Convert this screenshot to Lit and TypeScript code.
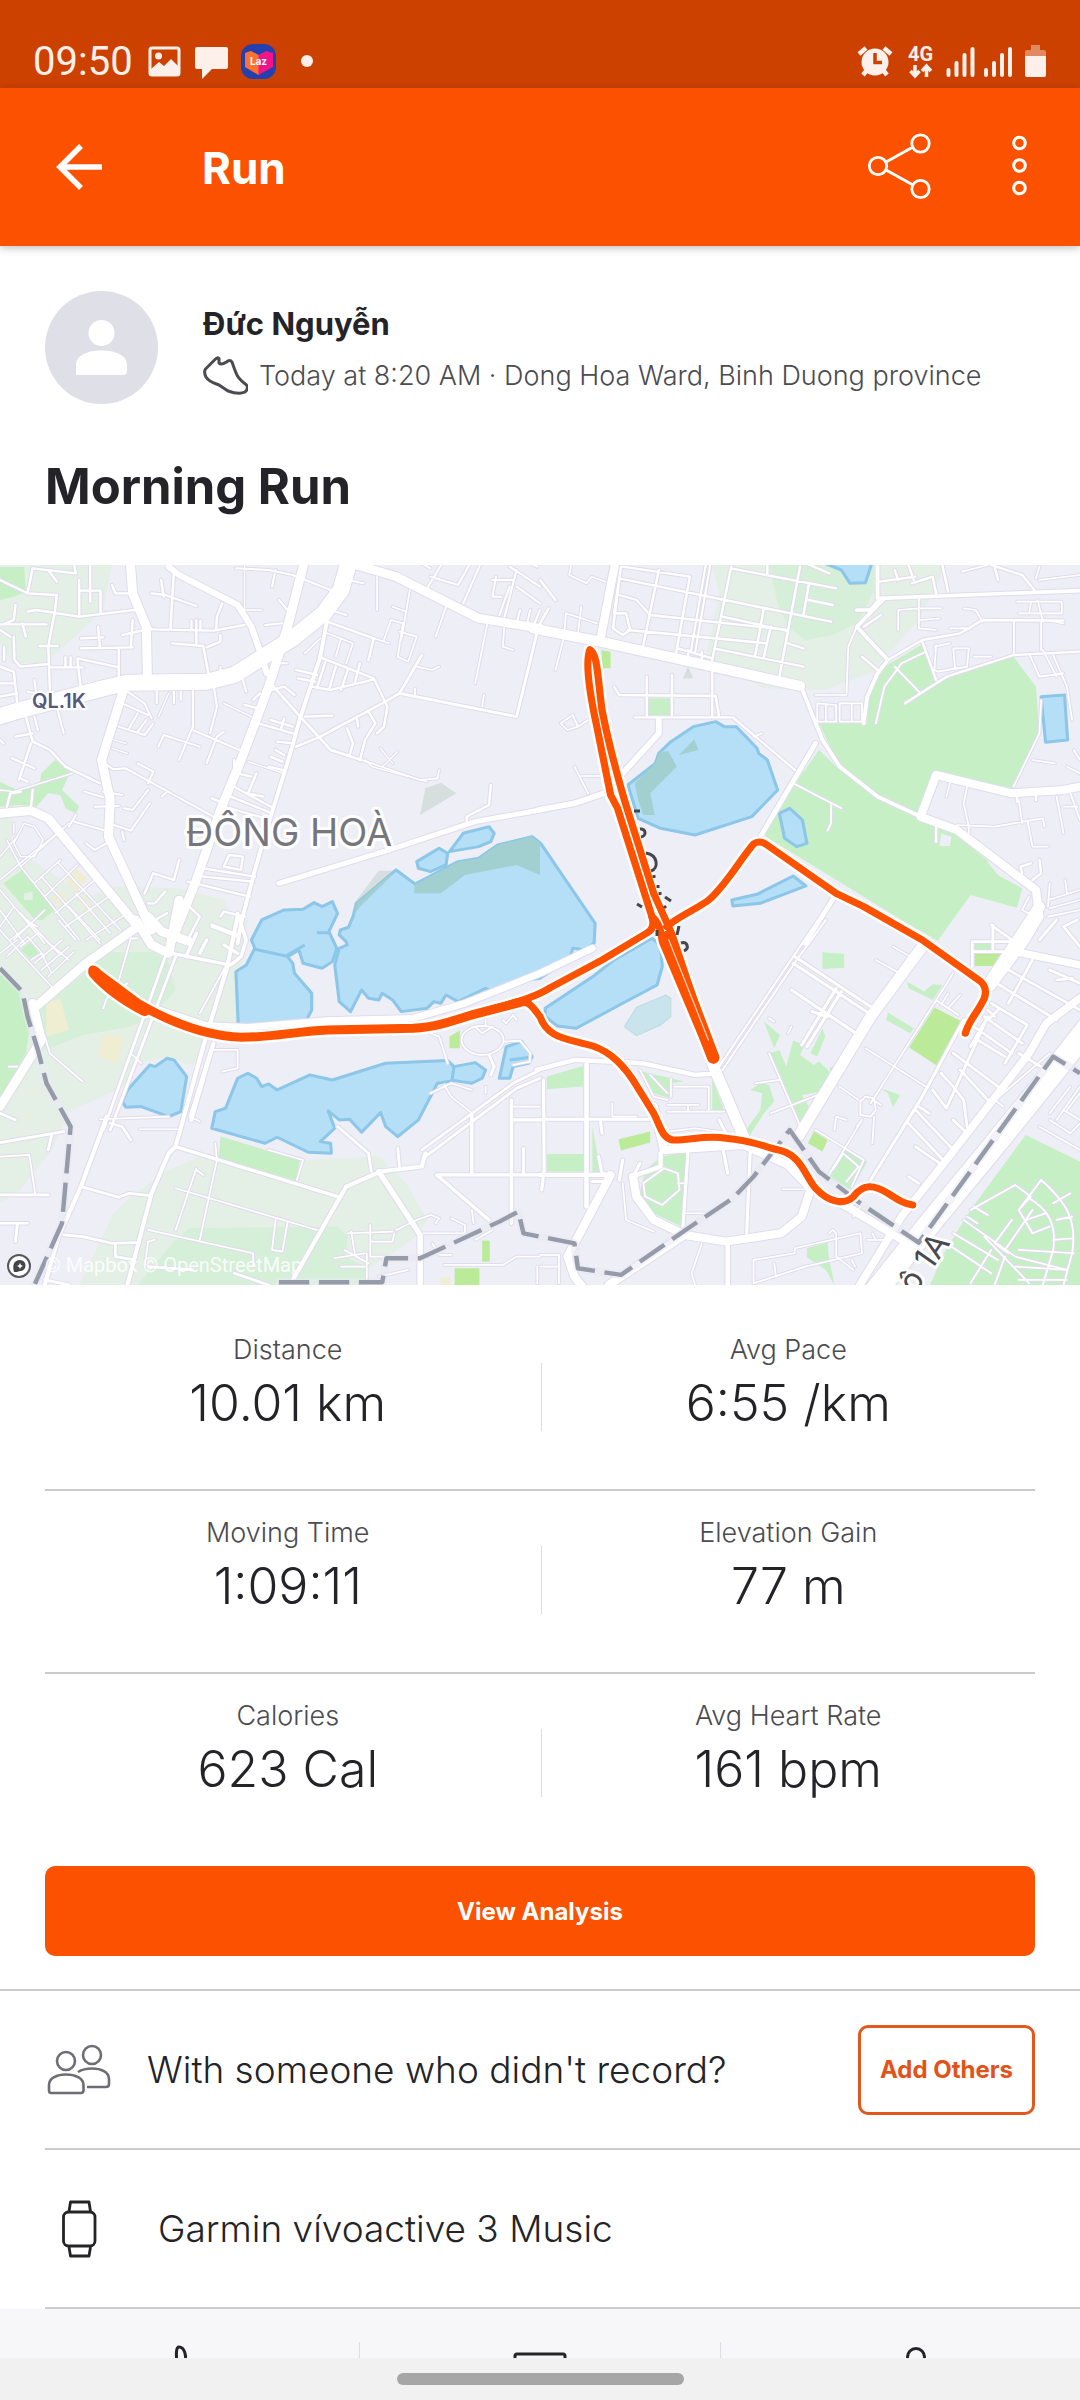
import { LitElement, html, svg, css } from "lit";
import { customElement, property } from "lit/decorators.js";

type Shape = [kind: string, d: string];
type Road = [width: number, d: string];

/* Map geometry is stored in four survey tiles, each 1568 units wide and 1080 units high. */
interface Tile {
  x: number;
  y: number;
  land: Shape[];
  water: string[];
  shade: Shape[];
  roads: Road[];
  border: string[];
}

const northWest: Tile = {
  x: 0,
  y: 0,
  land: [
    ["pale", "M75 15H325L300 150 165 280 130 310H40L0 250V120Z"],
    ["park", "M0 20H70L75 95 40 110 0 120Z"],
    ["pale", "M0 770L40 780 30 860 90 900 260 1010 330 980 520 985 650 1020 700 1140H0Z"],
    ["park", "M160 600L205 635 180 690 230 740 220 760 190 745 175 705 140 700 105 740 60 735 0 740V665L50 690 115 670 120 640Z"],
    ["park", "M10 970L65 930 160 1050 110 1090Z"],
    ["pale", "M70 1000L95 995V1020H70Z"],
    ["sand", "M190 960L220 925 255 955 220 995Z"],
    ["sand", "M150 1015L170 990 195 1010 170 1035Z"],
    ["sand", "M230 1020L245 1010 270 1050 255 1065Z"],
    ["grey", "M1235 685L1280 668 1325 700 1220 765Z"],
    ["grey", "M1028 1030L1100 932H1150L1030 1060Z"],
  ],
  water: [
    "M1025 1070L1035 1030 1150 930 1205 972 1330 905 1390 895 1445 855 1545 830 1570 850 1728 1090 1725 1150 1700 1170 1663 1165 1655 1195 1568 1255 1500 1265 1430 1295 1410 1285 1330 1325 1295 1305 1280 1330 1260 1325 1240 1345 1165 1355 1140 1320 1110 1300 1100 1320 1070 1315 1050 1290 1018 1355 985 1325 972 1215 985 1165 1008 1155 1005 1145 985 1125 988 1110 1012 1102Z",
    "M1210 905L1275 865 1300 880 1295 915 1250 935 1215 925Z",
    "M1305 875L1345 820 1420 800 1435 820 1425 845 1390 860Z",
    "M760 1080L825 1050 880 1048 912 1028 935 1040 965 1025 980 1060 955 1115 978 1165 965 1205 935 1225 880 1210 868 1170 835 1190 850 1210 855 1240 905 1300 905 1350 890 1380 750 1395 692 1402 685 1235 715 1215 740 1165 730 1140Z",
    "M740 1168L830 1188 885 1155M920 1118H955",
  ],
  shade: [
    ["marsh", "M1203 975L1330 905 1390 895 1445 855 1545 830 1568 848V945L1500 915 1350 945 1280 1000H1203Z"],
    ["marsh", "M1028 1065L1035 1030 1120 955 1140 940 1130 955 1045 1040Z"],
  ],
  roads: [
    [4, "M0 690L40 695 210 640M1105 565L1140 610M1155 575L1110 620M1060 600L1080 620 1240 665M650 430L730 470M710 0V150H760M460 470L490 400M325 565L370 580M330 540L365 550M720 605L825 640"],
    [4, "M40 850L70 790 100 800 125 840 100 890 60 890ZM20 840L60 920 230 1140M60 920L200 790M100 970L175 900M130 1010L225 915M160 1060L275 960M190 1100L330 1000M170 910L350 1110M120 950L290 1150M0 1050L70 1150M0 990L130 1150M0 1100L40 1040M0 960L70 900 190 800M0 890L50 830M30 1140L90 1090 110 1100M250 1140L370 1060M220 1000L320 1120M40 790V820"],
    [7, "M0 60L80 100 165 105 160 150 140 260 145 390M80 100L95 25 220 40 215 15M140 30L165 65M80 155L105 150 230 170 390 150M230 60V165M262 10V125M230 92H292V160M325 75L335 100H370M440 208L620 212 710 195M505 30L495 205M440 100L480 105 570 138M468 60L475 110"],
    [7, "M645 130L630 170 628 205M500 250L590 258 605 340M570 180V250M556 182V210M582 182V210M600 262L640 245V225M235 235L300 232M235 265L385 262M285 200L290 260M345 262V355M385 180L380 260M355 225L440 205M225 295L345 322M225 300L235 390M145 322H240M190 292V320M205 292V320"],
    [7, "M0 320L40 335 50 430M0 370H40M0 410L50 400M40 230L42 300 60 320 140 312M115 258H168M0 193H135M65 190L75 230M45 135L40 180 15 190M0 210L30 230M12 260V300M75 470L95 545 145 570 190 620 290 670M45 530L95 520M0 540L10 550M90 550L55 660M35 595L100 625M60 655L80 665M95 690L90 740M20 740L30 700 60 695"],
    [6, "M165 440L185 520M100 470L110 510M370 395L420 430 440 475M345 500L420 525 445 490M355 430L430 465M375 505L400 460M400 515L425 480M310 615L330 628 365 625 620 770M400 610L445 635 430 670M470 710L485 695M245 695L300 712M275 740L345 738M300 695L355 705M360 745L385 750 430 690M330 795L380 812 435 730M355 815L360 840"],
    [6, "M560 390V500L520 600M620 375L630 440 610 520M560 510L695 570M455 390V430M505 395V430M525 395V420M460 560L475 525 580 560M600 610L630 530 650 515M700 340L715 395M640 320V360M200 800L220 765M215 785L300 810M250 850L275 870 310 850M100 360L105 400 80 395"],
    [8, "M790 375L880 480 960 570 1050 600M860 560L930 530 1110 430 1160 400 1225 285M1160 400L1500 470 1560 215"],
    [5, "M1050 600L1220 660 1270 655 1275 630M1210 320L1255 330 1275 320M1405 405L1400 440M1205 385V410M1085 235L1130 250M1115 240L1135 180 1170 190 1155 290 1185 305 1210 230 1160 215M1190 90L1165 240M1095 50V150M1295 140L1265 230M1415 190L1380 370M1465 190L1460 260 1490 270M1140 140L1180 155M885 280L930 235M950 220L1025 250 1005 310M990 235L975 290"],
    [7, "M950 185L1085 235 1070 300M925 290L1085 355 1125 440 1115 500 1095 520M905 380L960 390 1080 360M945 305L920 385M975 320L955 390M1010 330L990 390M1045 310L1030 370M860 330L920 345M865 355L915 365M885 470L965 467M785 480L850 500M805 545L850 550M750 490L850 520M825 475L815 510M1035 470L1040 500M1070 455L1090 490 1060 540 1045 600M1008 505L1025 550 1015 585M710 435L750 445M735 420L755 400M790 390L825 380 855 405"],
    [6, "M685 25L780 30 850 45 960 90M800 30L790 80M810 120L835 150M1010 60L1055 70M960 150L1005 165M770 195L820 190M810 310H835M1205 0L1250 25M1240 85L1290 0M1250 50L1330 75 1370 0M1345 130L1400 0M1430 60H1490M1440 50L1430 110H1455M1480 80L1450 165M1500 30L1465 170M1510 150L1500 190M1540 150L1530 190M1568 150L1550 195M1560 20L1520 0M1500 80L1568 130M1480 20L1568 80"],
    [7, "M1425 675L1420 735 1355 770V785M680 680L795 745M670 710L790 760M650 740L785 780M615 715L650 730M690 640L730 650M680 600V630M800 570L825 585M785 590L820 605M780 620L820 630M745 640L720 700 765 710M590 925L740 950M590 950L735 965M545 965L725 1010M665 885L705 890 700 930 650 920ZM520 900L505 960 445 940 420 1000M480 995L450 1030H430M550 1040L580 1070 550 1130M615 1100L690 1130M640 1070L650 1055 710 1070M450 1080L485 1060"],
    [11, "M950 180L930 290 870 480 840 590 780 790 740 930 700 1090 690 1150"],
    [15, "M810 970L1130 870 1380 785 1568 750"],
    [18, "M490 20L520 45 690 135 730 200 760 290 775 340"],
    [26, "M378 0L385 100 425 200 428 350M360 385L295 600 320 720 315 830 440 1110M885 0L835 200 820 250 780 380 700 600 640 750 570 960 500 1140M1020 10L1150 50 1390 175 1568 205M-20 762L90 752 140 775 400 1100"],
    [48, "M-20 475L60 450 300 385 370 368 600 365 680 345 850 235 940 160 990 90 1015 0"],
  ],
  border: [],
};

const northEast: Tile = {
  x: 1568,
  y: 0,
  land: [
    ["pale", "M500 15H1180L1100 180 960 340 820 390 650 385 480 300 520 100Z"],
    ["soft", "M665 15H970V90L920 190 850 225 770 240 720 200 690 130Z"],
    ["park", "M810 490H940L950 410 1000 320 1115 250 1150 360 1375 290 1440 380 1450 520 1375 685 1150 640 1105 765 980 710 870 620Z"],
    ["park", "M810 570L860 620 980 710 1105 775 1200 820 1310 910 1330 945 1400 985 1385 1043 1250 1005 1155 1142 1050 1080 640 820Z"],
    ["base", "M1165 820L1195 830 1190 858H1160Z"],
    ["base", "M1298 905L1330 900 1405 970 1385 973 1330 945Z"],
    ["park", "M315 415H378V465H315Z"],
    ["lime", "M178 270L205 275V325H180Z"],
    ["grey", "M430 320L445 355H415Z"],
  ],
  water: [
    "M255 675L335 610 345 580 380 545 445 500 510 485 535 500H570L630 565 635 580 660 600 690 690 615 770 450 825 350 805 285 775Z",
    "M695 760L725 745 762 780 775 850 745 860 710 835Z",
    "M557 1020L630 1003 735 948 772 978 640 1030 560 1038Z",
    "M1455 410L1523 405 1532 540 1468 547Z",
    "M815 5L875 30 900 70 945 68 965 5Z",
  ],
  shade: [
    ["marsh", "M275 670L335 610 345 580 372 572 397 620 320 700 333 765 300 765 285 720Z"],
    ["marsh", "M403 585L448 538 460 570Z"],
  ],
  roads: [
    [5, "M735 670L875 745M845 735V790L835 812M45 330L70 230 75 160 165 190M120 140L110 220M90 15L85 45 135 70 150 50 190 65M60 490L95 465 110 500 80 510ZM110 500L140 480M100 620L140 700M115 648H180M800 405H890M805 430L860 435V485H805ZM870 430H935V485H870ZM905 430V485M830 430V485M890 400L895 260 920 200M1000 380L975 490M1120 275L1050 310 1000 380M1030 320L1105 400M620 530L645 520"],
    [5, "M1145 260L1190 250M1150 255L1145 330 1155 335 1240 320 1245 265H1200L1205 325M1260 290H1310M1420 280L1450 350 1520 340M1460 270L1500 350M1490 285L1530 380 1545 480M1455 420L1450 520 1375 680M1430 600L1495 610M1550 570L1568 600M1530 620L1568 640M1240 680L1230 730 1245 800V830M1210 795L1320 800 1460 775 1465 800M1190 670L1180 710M1390 720L1400 790M1415 780L1430 860H1475M1500 710L1520 820M1540 700L1568 780M1520 740H1560"],
    [5, "M1376 180V285M1455 185V270M1445 120L1460 185M1385 125H1515V160H1390M1425 130L1420 160M1230 145L1265 150 1285 185M1100 110V205L1150 210M1105 145H1165M1105 180L1160 175M1040 210V150L1100 145M1225 35L1300 15M1450 60L1568 45M1440 55L1450 20M1190 205H1250M1470 180L1520 190"],
    [7, "M1110 245L1150 360M1010 300L1110 240 1220 220 1285 180 1520 182M1310 15L1400 45 1435 90M1320 20L1330 60M1165 0L1185 95M1080 70L1140 50 1150 100M1030 30L1040 60M985 65L1090 50M1070 15L1085 60M935 290L985 335M940 200L990 165M1150 800V845M1385 700V725M1440 700V720M1400 940L1395 920 1425 910M1450 900L1455 940 1430 960"],
    [5, "M1480 970L1475 1040M1475 1020L1568 990M1480 1045L1568 1020M1475 1070L1568 1050M1525 960L1530 1000M1420 1010L1400 1050 1440 1070"],
    [7, "M240 20L435 50 395 280M230 55L845 185M345 30L300 255M555 20L500 300M755 20L695 350M555 25L860 85M230 105L280 120 320 165 720 210M255 210L660 250M505 265L765 320M780 75L765 165M780 120L850 135M650 145L625 285M670 200L650 290M400 265L500 295M235 20L215 160 250 160 262 210 240 225 212 205ZM720 250L765 265M660 0V40M750 0L840 40M530 170L715 212M430 270V290M470 275V295"],
    [6, "M495 10L450 280M482 10L438 275"],
    [7, "M215 380L230 405 505 408M510 408L520 470M310 350V470M383 345V465M500 335V470M275 472H560L740 630M1060 430L1180 350 1375 285 1568 275M0 60L45 120M0 190L25 145"],
    [11, "M985 115L1568 92M1000 115L920 200 1010 300M1010 300L980 340 950 410 940 490M980 10V115M920 150H960L985 120M760 385L820 540 870 620 980 710 1105 770"],
    [14, "M800 550L640 830M855 1010L770 1150"],
    [17, "M345 480V520L240 640M-5 750L100 730 200 695"],
    [24, "M220 0L175 240M1568 680L1520 690 1370 700 1150 645 1105 770 1210 810 1440 990 1450 1070 1410 1140 1310 1280"],
    [30, "M-20 205L175 245 755 378"],
  ],
  border: [],
};

const southWest: Tile = {
  x: 0,
  y: 1080,
  land: [
    ["pale", "M0 0H720L700 130 690 320 600 340 560 440 490 410 400 430 360 500 200 575 150 690 50 820 0 850Z"],
    ["park", "M0 160L60 215 90 300 75 400 0 560Z"],
    ["soft", "M210 190L310 97H480L510 210 440 290 380 320 240 345 130 390 100 260Z"],
    ["park", "M60 90L90 65 115 105 90 120Z"],
    ["sand", "M135 250L175 235 200 330 135 350Z"],
    ["sand", "M285 410L300 345 360 350 340 430Z"],
    ["pale", "M380 830L490 750 600 700 900 720 1100 710 1180 790 1240 900 1210 950 1000 1095H230L330 880Z"],
    ["soft", "M550 925L980 920 1010 950 1000 1010 1060 1040 1080 1095H400L500 970Z"],
    ["park", "M640 650L870 720 860 782 635 715Z"],
    ["lime", "M1305 350L1335 332V385H1305Z"],
    ["lime", "M1400 962H1422V1025H1400Z"],
    ["lime", "M1320 1045H1392V1100H1320Z"],
    ["sand", "M1280 1072H1308V1100H1280Z"],
  ],
  water: [
    "M355 545L370 510 435 435 450 440 485 415 505 420 542 470 525 575 490 590 410 560 365 562Z",
    "M615 625L625 575 655 565 690 475 720 460 745 475 760 500 780 492 805 510 900 465 965 480 1120 430 1300 422 1318 440 1380 428 1410 450 1400 475 1370 490 1320 482 1270 490 1250 530 1215 600 1155 650 1120 620 1105 578 1050 637 1015 598 985 600 953 573 972 625 930 665 960 670 962 700 895 697 805 652 770 670Z",
    "M1318 440L1312 485",
    "M1450 475L1470 380 1515 365 1545 410 1535 430 1490 440 1480 475Z",
    "M1480 420L1540 412",
  ],
  shade: [],
  roads: [
    [4, "M60 80L110 40 200 120M0 30L60 100 150 200M100 130L180 60M40 60L130 -30M150 80L60 -20M80 0L170 100M170 0L220 60M0 100L50 60M120 150L200 80M140 170L215 95M90 120L120 100 150 160M20 110L80 50 130 110M200 -40L290 60"],
    [5, "M0 710L85 705 102 820M570 745L510 930M570 750L590 765M510 805L920 930M625 670L630 720 580 960M430 930L735 1000V1040M800 900L790 990 820 995 835 905M780 690L880 720 862 780M290 598L490 590M405 628H515M620 390H690V445L645 455M610 390L550 590 580 605M130 350L145 400 240 485M400 55H380L340 200M300 265L310 235 370 190M580 280L660 130M25 440H50M450 960L430 965 420 1040M380 400L410 430"],
    [5, "M1250 340L1275 350 1300 430M1290 495L1310 530 1365 575M1250 520L1310 490 1370 510M1380 320L1400 340 1430 320M1410 300V320M1460 300L1470 310 1490 285 1500 300M1465 365L1510 362 1540 400 1538 425 1490 435M1230 940H1350L1350 915 1310 895M1150 930L1210 900 1250 885 1275 895 1265 910M1010 940L1140 935M1020 935L1030 1000M1075 915V1010H1130M1075 965H1140L1145 940M1000 990L1070 1030M970 1015L1060 1000M990 1040H1060M1065 1000V1090M1290 1035H1460L1500 1010H1568M1380 960L1430 930M1370 870L1375 910M1100 1070L1185 1050M1255 970L1275 1005H1310M1560 1040V1090M1485 560H1568M1410 500V520"],
    [5, "M1340 360C1340 335 1370 318 1400 318S1462 335 1462 360 1430 405 1400 405 1340 385 1340 360Z"],
    [8, "M235 800L345 832 375 820 440 828M185 945L240 950 325 970 405 968M335 970V1010L390 1020M0 668L185 635M150 645L140 690M0 825H140M0 910H80M50 915L45 965M0 580L45 600M320 610L355 620 380 660M1420 405L1435 440 1425 465M1155 685L1160 740M1520 685V765M980 620L1070 700 1078 755M130 1080L200 1095M680 1060L780 1095M430 1040L560 1050"],
    [10, "M1370 580V765M1485 540V910M1568 765H1268L1420 900M1485 600H1568M500 100L665 135M510 680L980 830M615 15L690 45M570 40L540 110M600 60L580 100M650 75L690 100M690 -20L715 60 700 110 670 135"],
    [8, "M480 110L300 630M510 110L320 630M1568 450L1490 490 1225 690M1568 475L1500 505 1235 710"],
    [12, "M690 -10L660 140 590 380 510 680 490 700 440 820 370 1095M310 590L235 800 170 950 130 1095M1235 700L1225 740 1105 755 1005 800 850 1080M620 370L555 600"],
    [16, "M1100 755L1220 945V1095"],
    [20, "M270 160L440 262 600 317 720 322 950 302 1200 295 1350 250 1568 160 1720 85"],
    [26, "M400 20L250 130 110 255M95 250L120 360 0 560M395 0L440 75 490 100M430 -10L470 35 550 65M520 -60L490 100"],
  ],
  border: ["M0 145L65 215 80 290 110 390 135 490 205 620 180 910 100 1095", "M810 1087H1110L1122 1015H1220L1450 905 1505 875 1520 940 1568 950 1668 970 1678 1045 1803 1065 1998 925 2128 835 2188 770 2293 630 2378 755 2498 850 2668 968 3058 410 3136 460"],
};

const southEast: Tile = {
  x: 1568,
  y: 1080,
  land: [
    ["park", "M820 97L883 102V143L820 147Z"],
    ["park", "M1262 65H1310V90H1262Z"],
    ["lime", "M1262 98H1337V138H1262Z"],
    ["park", "M1065 185L1115 215 1140 193 1168 195 1140 240 1070 205Z"],
    ["park", "M1010 278L1085 325 1075 340 1005 300Z"],
    ["lime", "M1145 263L1225 305 1160 442 1072 383Z"],
    ["park", "M650 305L697 345 680 385Z"],
    ["park", "M665 400L695 390 715 440 735 362 768 375 755 405 795 435 810 425 850 465 820 515 760 525 780 560 755 620 700 470Z"],
    ["park", "M785 400L820 325 828 350 805 410Z"],
    ["park", "M865 430L890 375 920 350 850 470 840 445Z"],
    ["park", "M610 510L640 490 665 495 680 545 650 580 610 645 590 640 640 570 645 520Z"],
    ["park", "M990 505L1045 525 1025 562 1010 520Z"],
    ["park", "M20 470L125 438V500L20 508Z"],
    ["park", "M295 455L420 485 380 490 378 535 330 520Z"],
    ["park", "M500 475L535 572H500Z"],
    ["park", "M20 702H128V755H20Z"],
    ["park", "M152 620L178 770 152 765Z"],
    ["lime", "M228 658L320 635V668L235 692Z"],
    ["park", "M355 710L425 693 410 920 330 880 290 820 305 750Z"],
    ["lime", "M795 635L835 660 820 695 778 670Z"],
    ["park", "M880 685L950 725 905 810 830 770Z"],
    ["park", "M775 985L835 968 838 1010 855 1095 830 1050 775 1012Z"],
    ["park", "M1410 645L1568 725V1100H1130L1180 985 1250 870Z"],
  ],
  water: ["M15 265L160 165 215 120 325 55 350 75 355 140 340 195 240 250 105 325 50 318 15 290Z"],
  shade: [["pool", "M245 320L280 262 365 225 380 235V290L350 315 280 347Z"]],
  roads: [
    [5, "M975 120L1045 160M1025 80L1075 110M1150 240L1215 285M1165 255L1185 220M1185 265L1220 225M945 385L1120 500M1200 160L960 550M870 500L925 540M880 700L850 750M800 630L940 720 905 800M880 700L925 740 890 785M930 545L945 530 970 535 975 570 960 590 930 585ZM970 590L965 670M975 545L990 555M855 630L860 590 890 600M920 620L935 600 830 780M665 400L760 630M670 580L820 520M625 490L695 480M665 295L680 305M720 340L730 320"],
    [5, "M380 475V530M390 500H490V570M370 575H535M370 555H460M210 550V590H280M430 560V575M370 635L450 625 550 640M420 880H480M240 790L250 900 330 935M470 970L440 1060 450 1095M705 808H770M620 1020L740 1000V985L930 940 935 1000 770 1040 620 1090ZM840 940L850 930 860 940V1010L910 1050M950 960H1020M680 1030L685 1070M905 1020L915 1040M300 790L360 745 400 760 405 810 355 855 305 830ZM400 790H420M290 450L330 530 370 540M320 465L370 520M0 1005H55V1090M0 1040H50M910 890L930 860M965 940L975 960"],
    [8, "M1360 150L1568 270M1430 120L1360 250M1310 180L1500 300M1480 150L1568 190M1500 180L1545 175M1310 250L1415 315 1350 430M1290 290L1400 370M1260 320L1370 400M1200 400L1330 500M1250 380L1300 290M1165 460L1200 500 1230 540 1240 620M1140 510L1180 565 1230 450 1300 290M1220 450L1300 540M1090 570L1200 690M1070 610L1170 720M1100 560L1130 580M1090 680L1160 730M1200 600L1240 640M1070 770L1100 790M1270 360L1350 410M1300 270L1320 290M1330 270L1300 300M1255 140V65H1390M1315 15V90M1310 15L1390 75M1260 95H1390M1450 60L1500 0M1520 20L1568 80M1520 20L1560 0M1390 400L1470 450"],
    [5, "M1380 795L1250 870M1430 870L1350 990M1455 780C1530 850 1560 900 1545 1000L1520 1095M1420 835C1480 870 1500 920 1490 990L1460 1095M1380 795L1425 830 1390 870 1430 940 1480 920M1290 950L1420 1090M1230 900L1380 1010 1530 1050M1200 940L1330 1020M1180 970L1310 1060M1370 900L1320 970 1360 1000M1410 900L1470 880M1455 780L1390 870M1490 850L1540 820M1500 900L1545 890M1490 960L1548 955M1390 990L1550 1000M1380 1040L1530 1050M1310 990L1250 1090M1350 1010L1320 1095M1240 890L1270 910M1390 1080L1530 1080M1260 860L1300 885"],
    [5, "M1300 560L1480 400M1320 540L1345 560M1500 600L1568 500M1520 570L1568 600M1450 620L1568 690M1480 580L1540 500M1480 600L1540 640 1568 610M1530 570L1568 520"],
    [9, "M735 130L970 290M740 110L975 270M730 210L925 345M860 205L760 375M875 215L775 380M790 275L835 290M1230 300L1110 530 960 780M0 598H340M430 690L415 920M610 700L600 940M520 600L540 640M530 680L545 760M175 600L180 640M170 710L180 760 210 765M230 780L240 720M10 480L12 750 5 810M270 770L290 730M150 785H200"],
    [6, "M815 -10L735 110 520 440M830 0L745 120 530 450"],
    [13, "M-10 450L100 420 300 430 450 465 520 460M135 430V860M0 765H200M545 960V1095M350 700V740L280 765"],
    [24, "M330 560L360 690 590 675 720 735 780 800 900 865 1060 965M205 765L80 1010 100 1070 130 1110M270 770L280 830 330 900 420 945 540 965 700 940 760 890 785 810M420 945L200 1095"],
    [22, "M1380 95L1568 135M1600 210L1470 310 1420 400 1180 720 1050 890 920 1110"],
    [32, "M1110 80L960 290 750 650M500 430L595 660M1450 -40L1310 180"],
    [66, "M1640 260L1480 470 1300 700 1140 900 970 1120"],
  ],
  border: [],
};

const tiles: Tile[] = [northWest, northEast, southWest, southEast];

/* Recorded track, in the same survey units as the tiles. */
const track: Road[] = [
  [21, "M1713 270C1700 300 1710 390 1733 500L1773 705 1793 745 1893 1070C1900 1095 1894 1110 1880 1118L1748 1200 1600 1282C1550 1315 1500 1325 1370 1365"],
  [27, "M1530 1322L1370 1365C1310 1385 1260 1402 1200 1405L950 1410C850 1415 800 1432 700 1432C600 1428 500 1390 400 1330L270 1230"],
  [21, "M1713 270C1735 280 1735 350 1748 450C1765 540 1785 620 1813 720L1898 1000 1950 1120 2073 1500"],
  [21, "M1893 1070C1925 1100 1917 1130 1925 1150L2066 1495"],
  [21, "M1936 1100C1968 1070 2018 1050 2058 1020C2108 975 2148 900 2188 852Q2203 840 2223 852L2428 1000 2508 1040 2678 1140 2848 1265Q2868 1285 2858 1315C2838 1360 2813 1380 2803 1420"],
  [21, "M1480 1332C1540 1310 1550 1350 1568 1370C1588 1430 1638 1435 1698 1452C1758 1465 1798 1500 1838 1560L1898 1660C1918 1700 1923 1735 1953 1740C1998 1742 2048 1725 2108 1735C2178 1740 2218 1760 2268 1772C2328 1790 2338 1850 2368 1885C2408 1930 2453 1935 2478 1910C2508 1870 2538 1875 2578 1900C2608 1920 2628 1933 2650 1935"],
];
const trackThick: string[] = ["M274 1237C310 1280 350 1312 420 1350", "M1938 1130L1956 1180 2071 1493"];

@customElement("route-map")
export class RouteMap extends LitElement {
  static styles = css`
    :host { display: block; }
    .map { display: block; width: 100%; background: #eeeef6; }
    .line { fill: none; stroke-linecap: round; stroke-linejoin: round; }
    .base { fill: #eeeef6; }
    .pale { fill: #e4efe6; }
    .soft { fill: #d6efd8; }
    .park { fill: #c6efc6; }
    .lime { fill: #bbea99; }
    .sand { fill: #efeed2; }
    .grey { fill: #d6dfde; }
    .pool { fill: #c9e4ec; stroke: #bcdcdc; stroke-width: 3; }
    .marsh { fill: #a2d0d1; }
    .water { fill: #b5dff7; stroke: #8cc6e8; stroke-width: 9; stroke-linejoin: round; }
    .casing { stroke: #e0dcec; }
    .road { stroke: #ffffff; }
    .border-halo { stroke: #e9e9f4; stroke-width: 24; opacity: 0.6; }
    .border { stroke: #969baa; stroke-width: 13; stroke-dasharray: 88 28; stroke-linecap: butt; }
    .halo { stroke: #ffffff; }
    .track { stroke: #fc5200; }
    .gap { stroke: #ffc9ad; stroke-width: 4; }
    .label { font-family: Inter, Roboto, sans-serif; paint-order: stroke; stroke: #ffffff; stroke-width: 6px; stroke-linejoin: round; }
    .town { font-size: 38px; font-weight: 400; fill: #76777e; }
    .ref { font-size: 20px; font-weight: 600; fill: #56587c; stroke-width: 4px; }
    .street { font-size: 32px; font-weight: 400; fill: #4a4a50; }
    .credit { font-family: Roboto, sans-serif; font-size: 20px; font-weight: 400; fill: #ffffff; opacity: 0.85; }
    .mark { fill: none; stroke: #45464c; stroke-width: 3; }
  `;

  render() {
    const at = (t: Tile) => `translate(${t.x} ${t.y})`;
    return html`<svg class="map" viewBox="0 0 1080 720" role="img" aria-label="Route map">
      <g transform="translate(0 -5) scale(0.3444 0.3333)">
        ${tiles.map((t) => svg`<g transform=${at(t)}>${t.land.map(([k, d]) => svg`<path class=${k} d=${d} />`)}</g>`)}
        ${tiles.map((t) => svg`<g transform=${at(t)}>
          ${t.water.map((d) => svg`<path class="water" d=${d} />`)}
          ${t.shade.map(([k, d]) => svg`<path class=${k} d=${d} />`)}
        </g>`)}
        ${tiles.map((t) => svg`<g transform=${at(t)}>${t.roads.map(([w, d]) => svg`<path class="line casing" stroke-width=${w + 6} d=${d} />`)}</g>`)}
        ${tiles.map((t) => svg`<g transform=${at(t)}>${t.roads.map(([w, d]) => svg`<path class="line road" stroke-width=${w} d=${d} />`)}</g>`)}
        ${tiles.map((t) => svg`<g transform=${at(t)}>${t.border.map((d) => svg`<path class="line border-halo" d=${d} /><path class="line border" d=${d} />`)}</g>`)}
        ${track.map(([w, d]) => svg`<path class="line halo" stroke-width=${w + 14} d=${d} />`)}
        ${trackThick.map((d) => svg`<path class="line halo" stroke-width="50" d=${d} />`)}
        ${track.map(([w, d]) => svg`<path class="line track" stroke-width=${w} d=${d} />`)}
        ${trackThick.map((d) => svg`<path class="line track" stroke-width="36" d=${d} />`)}
        <path class="line gap" d="M1942 1140L2057 1440" />
      </g>
      <path class="mark" d="M634 246H640M640 264C646 263 647 271 641 272M646 288C658 290 659 303 651 306M654 310V313M658 320V323M660 327V330M665 332L671 336M664 341L666 343M637 339L642 342M679 361L677 370M657 365V371M681 378C687 376 690 383 684 386" />
      <text class="label town" x="289" y="281" text-anchor="middle">ĐÔNG HOÀ</text>
      <text class="label ref" x="32" y="143">QL.1K</text>
      <text class="label street" transform="translate(951 678) rotate(-55)" text-anchor="end">ộ 1A</text>
      <circle cx="19" cy="701" r="11" fill="#ffffff" stroke="#55565c" stroke-width="2" />
      <path d="M14 707C12 700 14 695 20 695A5.500 5.500 0 0 1 20 706C18 707 16 707 14 707Z" fill="#44454b" />
      <path d="M20 698L21 700 23 701 21 702 20 704 19 702 17 701 19 700Z" fill="#ffffff" />
      <text class="credit" x="45" y="707">© Mapbox © OpenStreetMap</text>
    </svg>`;
  }
}

@customElement("stat-cell")
export class StatCell extends LitElement {
  @property() label = "";
  @property() value = "";

  static styles = css`
    :host { display: block; flex: 1; text-align: center; }
    .label { font-size: 27px; line-height: 32px; color: #4b4b50; }
    .value { font-size: 50px; line-height: 60px; font-weight: 350; margin-top: 7px; color: #242428; }
  `;

  render() {
    return html`<div class="label">${this.label}</div><div class="value">${this.value}</div>`;
  }
}

const stats = [
  [["Distance", "10.01 km"], ["Avg Pace", "6:55 /km"]],
  [["Moving Time", "1:09:11"], ["Elevation Gain", "77 m"]],
  [["Calories", "623 Cal"], ["Avg Heart Rate", "161 bpm"]],
];

@customElement("app-root")
export class AppRoot extends LitElement {
  static styles = css`
    :host {
      display: flex; flex-direction: column; height: 100vh; background: #ffffff;
      color: #242428; font-family: Inter, Roboto, sans-serif; font-weight: 300;
    }
    * { box-sizing: border-box; }
    svg { display: block; flex: none; }
    button { font: inherit; color: inherit; background: none; border: 0; padding: 0; margin: 0; cursor: pointer; }
    h1, h2, p { margin: 0; }

    .status {
      flex: none; display: flex; align-items: flex-end; justify-content: space-between;
      height: 88px; padding: 0 33px 5px; background: #cc4100; color: #fdefe9;
    }
    .group { display: flex; align-items: center; height: 44px; }
    .clock { font-family: Roboto, sans-serif; font-size: 40px; font-weight: 400; line-height: 44px; margin-right: 14px; padding-top: 2px; }

    .appbar {
      flex: none; display: flex; align-items: center; height: 158px; padding: 0 45px;
      background: #fc5200; color: #ffffff; position: relative; box-shadow: 0 2px 8px rgba(0, 0, 0, 0.25);
    }
    .appbar h1 { flex: 1; margin-left: 89px; font-size: 44px; font-weight: 700; line-height: 56px; padding-top: 2px; }
    .icon-button { display: block; flex: none; }
    .more { margin-left: 76px; }

    .page { flex: 1; min-height: 0; overflow: auto; scrollbar-width: none; }

    .athlete { display: flex; align-items: center; gap: 45px; padding: 45px 45px 0; }
    .who { padding-top: 4px; }
    .name { font-size: 31px; font-weight: 700; line-height: 40px; }
    .when { display: flex; align-items: center; gap: 11px; margin-top: 10px; font-size: 27px; line-height: 40px; color: #4b4b50; }
    .when span { padding-top: 2px; }
    .title { padding: 52px 45px 47px; font-size: 49px; font-weight: 700; line-height: 62px; }

    .stats { padding: 0 45px; }
    .row { display: flex; align-items: flex-start; height: 183px; padding-top: 26px; border-top: 2px solid #cbcbcd; }
    .row:first-child { margin-top: 21px; border-top-color: transparent; }
    .row stat-cell:first-child { margin-right: 6px; margin-left: -4px; }
    .rule { width: 1px; height: 68px; margin-top: 29px; background: #dcdcde; }

    .cta { padding: 11px 45px 33px; }
    .primary {
      display: block; width: 100%; height: 90px; border-radius: 10px; background: #fc5200;
      color: #ffffff; font-size: 24px; font-weight: 700;
    }
    .others {
      display: flex; align-items: center; height: 159px; padding: 0 45px; border-top: 2px solid #cbcbcd;
    }
    .others p { flex: 1; margin-left: 36px; font-size: 37px; line-height: 48px; }
    .outline {
      flex: none; height: 90px; padding: 0 19px; border: 3px solid #e2581f; border-radius: 10px;
      color: #e2531a; font-size: 24px; font-weight: 700;
    }
    .device {
      display: flex; align-items: center; gap: 61px; height: 161px; margin-left: 45px; padding-left: 17px;
      border: 2px solid #cbcbcd; border-width: 2px 0; font-size: 37px;
    }
    .tabs { display: flex; height: 140px; padding-top: 33px; }
    .footer { background: #f7f7fa; }
    .tab { flex: 1; display: flex; justify-content: center; align-items: flex-start; }
    .tab + .tab { border-left: 1px solid #dedee2; }

    .navbar { flex: none; display: flex; justify-content: center; padding-top: 15px; height: 42px; background: #f1f1f1; }
    .handle { width: 287px; height: 12px; border-radius: 6px; background: #a6a6a6; }
  `;

  private signal() {
    return svg`<path d="M2 24V29M10 17V29M18 9V29M26 3V29" stroke="currentColor" stroke-width="4" stroke-linecap="round" />`;
  }

  render() {
    return html`
      <div class="status">
        <div class="group">
          <span class="clock">09:50</span>
          <svg width="130" height="38" viewBox="147 42 130 38" role="img" aria-label="Notifications">
            <rect x="150" y="48" width="29" height="27" rx="2" fill="none" stroke="currentColor" stroke-width="3" />
            <circle cx="158.500" cy="56" r="3.500" fill="currentColor" />
            <path d="M151 69L159 62 164 66 171 59 179 67V75H151Z" fill="currentColor" />
            <path d="M197 47H226Q228 47 228 49V67Q228 69 226 69H212L202 79V69H197Q195 69 195 67V49Q195 47 197 47Z" fill="currentColor" />
            <rect x="241" y="44" width="35" height="35" rx="12" fill="#2340ae" />
            <path d="M245 53L251 51 258.500 55 266 51 273 53V67L258.500 75 245 67Z" fill="#f0148c" />
            <path d="M245 53L251 51 258.500 55V75L245 67Z" fill="#f9722e" />
            <text x="258.500" y="65" text-anchor="middle" font-family="Inter, sans-serif" font-size="10" font-weight="700" fill="#ffffff">Laz</text>
          </svg>
          <svg width="36" height="38" viewBox="277 42 36 38" aria-hidden="true"><circle cx="307" cy="61" r="6" fill="currentColor" /></svg>
        </div>
        <div class="group">
          <svg width="190" height="38" viewBox="857 42 190 38" role="img" aria-label="Alarm, 4G, signal, battery">
            <circle cx="875" cy="62" r="13.500" fill="currentColor" />
            <path d="M859 54L866 48M891 54L884 48M863 75L867 70M887 75L883 70" stroke="currentColor" stroke-width="4.500" />
            <path d="M875 53V62.500H882" fill="none" stroke="#cc4100" stroke-width="3.500" />
            <text x="920.500" y="61" text-anchor="middle" font-family="Roboto, sans-serif" font-size="20" font-weight="700" fill="currentColor">4G</text>
            <path d="M915 65V75M910.500 71L915 76 919.500 71M926.500 77V67M922 71L926.500 66 931 71" fill="none" stroke="currentColor" stroke-width="3.500" />
            <g transform="translate(946.500 46)">${this.signal()}</g>
            <g transform="translate(984 46)">${this.signal()}</g>
            <path d="M1031 45H1040V50H1044Q1046 50 1046 52V56H1025V52Q1025 50 1027 50H1031Z" fill="#e08a64" />
            <path d="M1025 56H1046V75Q1046 77 1044 77H1027Q1025 77 1025 75Z" fill="currentColor" />
          </svg>
        </div>
      </div>

      <header class="appbar">
        <button class="icon-button" aria-label="Back">
          <svg width="68" height="60" viewBox="45 137 68 60" fill="none" stroke="currentColor" stroke-width="5.500"><path d="M81 146L60 167 81 188M60 167H102" /></svg>
        </button>
        <h1>Run</h1>
        <button class="icon-button" aria-label="Share">
          <svg width="64" height="70" viewBox="867 132 64 70" fill="none" stroke="currentColor" stroke-width="2.800">
            <circle cx="878" cy="166" r="8.700" /><circle cx="920.500" cy="143.500" r="8.700" /><circle cx="920.500" cy="189" r="8.700" />
            <path d="M886 162L913 147M886 170L913 185" />
          </svg>
        </button>
        <button class="icon-button more" aria-label="More options">
          <svg width="28" height="70" viewBox="1007 132 28 70" fill="none" stroke="currentColor" stroke-width="3"><circle cx="1019.500" cy="143" r="5.800" /><circle cx="1019.500" cy="165.500" r="5.800" /><circle cx="1019.500" cy="188" r="5.800" /></svg>
        </button>
      </header>

      <main class="page">
        <section class="athlete">
          <svg width="113" height="113" viewBox="0 0 113 113" role="img" aria-label="Avatar">
            <circle cx="56.500" cy="56.500" r="56.500" fill="#dfdfe8" />
            <circle cx="56.500" cy="42" r="13" fill="#ffffff" />
            <path d="M31 84V74C31 64 43 59.500 56.500 59.500S82 64 82 74V80Q82 84 78 84H35Q31 84 31 84Z" fill="#ffffff" />
          </svg>
          <div class="who">
            <h2 class="name">Đức Nguyễn</h2>
            <div class="when">
              <svg width="45" height="40" viewBox="202 358 45 40" fill="none" stroke="currentColor" stroke-width="3" stroke-linejoin="round" role="img" aria-label="Run">
                <path d="M214.500 362L204.500 372Q202.500 375 205 380C208 385 213 386 218 388L227 394Q238 398 244 395Q248 392 245.500 388C236 381 236 378 233.500 372L231 365Q229 362 225.500 365Q220 368.500 218 366V361.500Q216.500 360 214.500 362Z" />
              </svg>
              <span>Today at 8:20 AM · Dong Hoa Ward, Binh Duong province</span>
            </div>
          </div>
        </section>
        <h2 class="title">Morning Run</h2>
        <route-map></route-map>

        <section class="stats">
          ${stats.map(
            ([a, b]) => html`<div class="row">
              <stat-cell .label=${a[0]} .value=${a[1]}></stat-cell>
              <div class="rule"></div>
              <stat-cell .label=${b[0]} .value=${b[1]}></stat-cell>
            </div>`,
          )}
        </section>

        <div class="cta"><button class="primary">View Analysis</button></div>

        <section class="others">
          <svg width="66" height="54" viewBox="45 2042 66 54" fill="none" stroke="#6d6d75" stroke-width="2.600" stroke-linejoin="round" aria-hidden="true">
            <circle cx="66" cy="2060" r="9" /><circle cx="92" cy="2054" r="9" />
            <path d="M51 2092Q49 2092 49 2089V2084C49 2077 57 2073.500 66 2073.500S83.500 2077 83.500 2084V2089Q83.500 2092 81 2092Z" />
            <path d="M78 2071C82 2068.500 87 2067.500 92 2067.500C101 2067.500 109 2071 109 2078V2083Q109 2086 106 2086H87" />
          </svg>
          <p>With someone who didn't record?</p>
          <button class="outline">Add Others</button>
        </section>

        <section class="device">
          <svg width="35" height="58" viewBox="61.500 2200 35 58" fill="none" stroke="currentColor" stroke-width="2.800" stroke-linejoin="round" aria-hidden="true">
            <rect x="63" y="2212" width="31.500" height="34" rx="5" />
            <path d="M68.500 2211.500L70 2202H88.500L90 2211.500M68.500 2247L70 2256H88.500L90 2247" />
          </svg>
          <span>Garmin vívoactive 3 Music</span>
        </section>

        <footer class="footer">
          <div class="tabs">
            <button class="tab" aria-label="Kudos">
              <svg width="56" height="60" viewBox="0 0 56 60" fill="none" stroke="currentColor" stroke-width="3" stroke-linejoin="round"><path d="M6 32H18L25 20C24 12 24 5 27 5C32 5 35 12 33 24H48Q52 24 51 30L47 50Q46 54 42 54H6Z" /></svg>
            </button>
            <button class="tab" aria-label="Comments">
              <svg width="56" height="60" viewBox="0 0 56 60" fill="none" stroke="currentColor" stroke-width="3" stroke-linejoin="round"><path d="M5 12H51Q53 12 53 14V44H32L22 54V44H3V14Q3 12 5 12Z" /></svg>
            </button>
            <button class="tab" aria-label="Add others">
              <svg width="56" height="60" viewBox="0 0 56 60" fill="none" stroke="currentColor" stroke-width="3"><circle cx="44" cy="15" r="8.500" /><path d="M28 54V42C28 32 34 28 44 28S56 32 56 42V54ZM4 30H20M12 22V38" /></svg>
            </button>
          </div>
        </footer>
      </main>

      <nav class="navbar" aria-label="System navigation"><div class="handle"></div></nav>
    `;
  }
}
